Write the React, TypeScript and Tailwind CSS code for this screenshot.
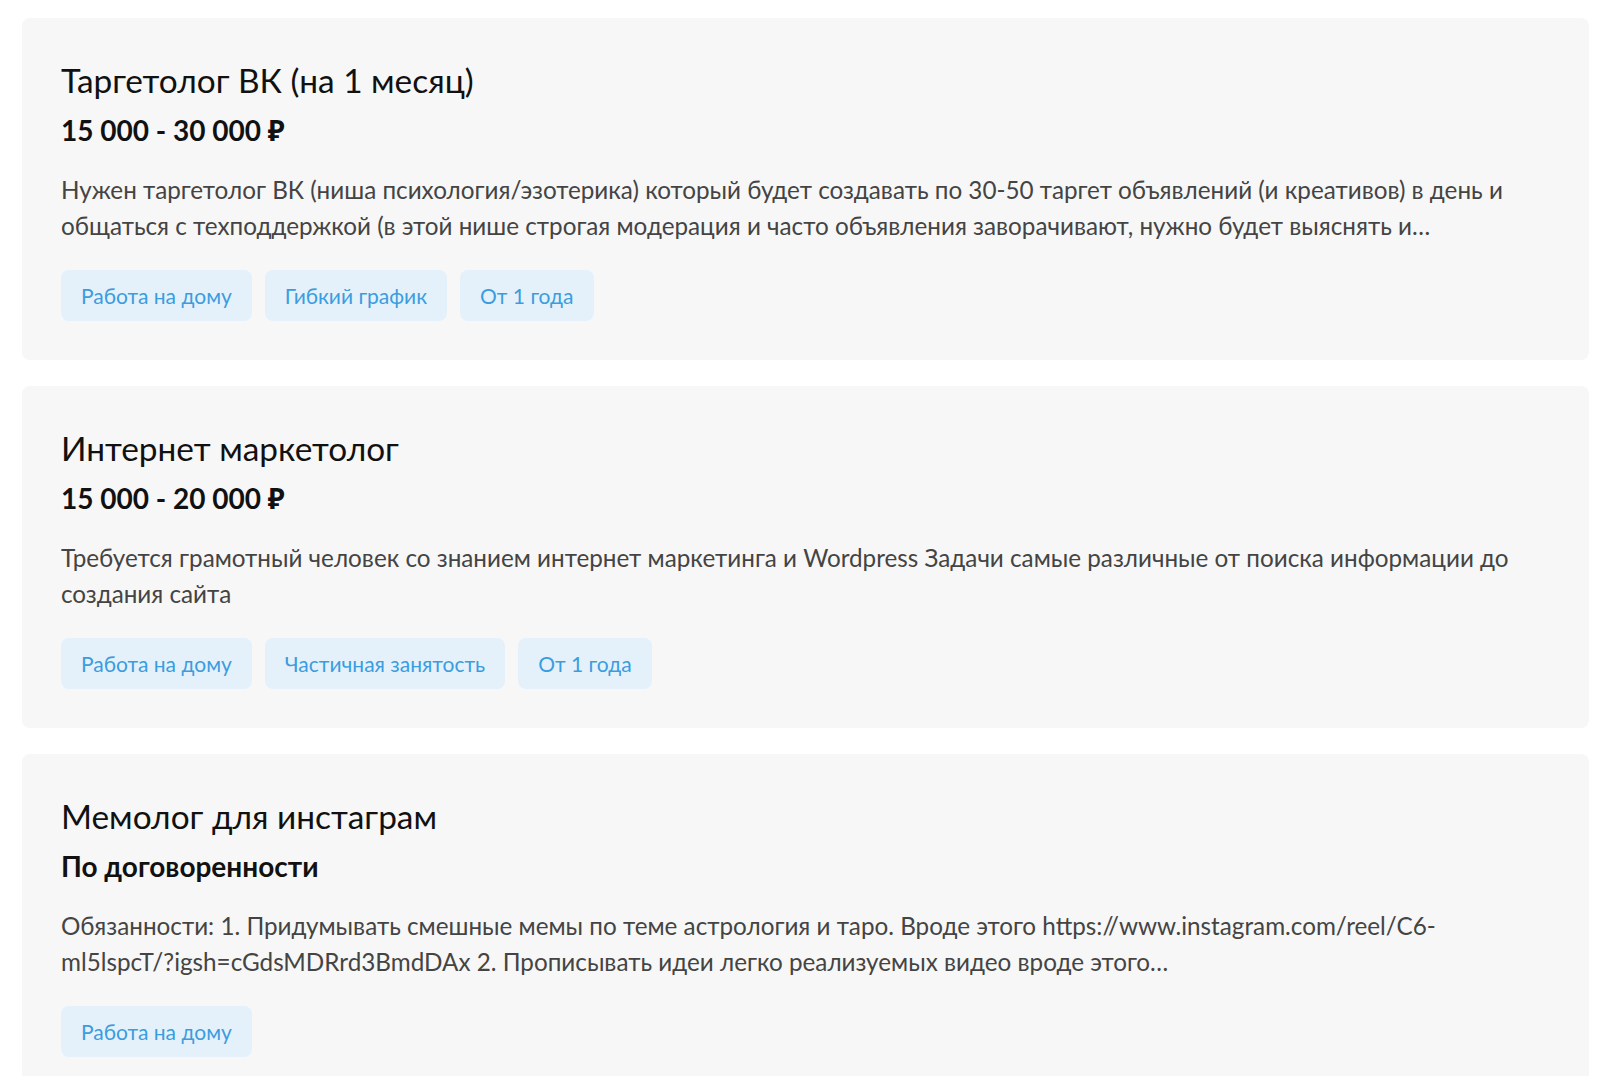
import React from "react";

type Vacancy = {
  title: string;
  salary: string;
  description: React.ReactNode;
  tags: string[];
};

const vacancies: Vacancy[] = [
  {
    title: "Таргетолог ВК (на 1 месяц)",
    salary: "15 000 - 30 000 ₽",
    description:
      "Нужен таргетолог ВК (ниша психология/эзотерика) который будет создавать по 30-50 таргет объявлений (и креативов) в день и общаться с техподдержкой (в этой нише строгая модерация и часто объявления заворачивают, нужно будет выяснять и…",
    tags: ["Работа на дому", "Гибкий график", "От 1 года"],
  },
  {
    title: "Интернет маркетолог",
    salary: "15 000 - 20 000 ₽",
    description:
      "Требуется грамотный человек со знанием интернет маркетинга и Wordpress Задачи самые различные от поиска информации до создания сайта",
    tags: ["Работа на дому", "Частичная занятость", "От 1 года"],
  },
  {
    title: "Мемолог для инстаграм",
    salary: "По договоренности",
    description: (
      <>
        Обязанности: 1. Придумывать смешные мемы по теме астрология и таро. Вроде этого{" "}
        <span className="whitespace-nowrap">https://www.instagram.com/reel/C6-</span>
        <span className="whitespace-nowrap">ml5lspcT/?igsh=cGdsMDRrd3BmdDAx</span> 2. Прописывать идеи легко
        реализуемых видео вроде этого…
      </>
    ),
    tags: ["Работа на дому"],
  },
];

function Card({ v }: { v: Vacancy }) {
  return (
    <div className="rounded-[8px] bg-[#f7f7f7] pl-[39px] pr-[39px] pt-[42px] pb-[39px]">
      <h2 className="text-[33.4px] leading-[40px] font-normal text-[#111111]">{v.title}</h2>
      <div className="mt-[12px] text-[28px] leading-[36px] font-bold text-[#111111]">{v.salary}</div>
      <p className="mt-[24px] text-[24.25px] leading-[36px] text-[#444444]">{v.description}</p>
      <div className="mt-[26px] flex flex-wrap gap-[13px]">
        {v.tags.map((t) => (
          <span
            key={t}
            className="flex h-[51px] items-center rounded-[8px] bg-[#e4f1fb] px-[20px] text-[21px] leading-[25px] text-[#3a9de0]"
          >
            {t}
          </span>
        ))}
      </div>
    </div>
  );
}

export default function App() {
  return (
    <div className="min-h-screen bg-white font-['Lato','Noto_Sans',sans-serif]">
      <div className="ml-[22px] mr-[11px] flex flex-col gap-[26px] pt-[18px] pb-[20px]">
        {vacancies.map((v) => (
          <Card key={v.title} v={v} />
        ))}
      </div>
    </div>
  );
}
